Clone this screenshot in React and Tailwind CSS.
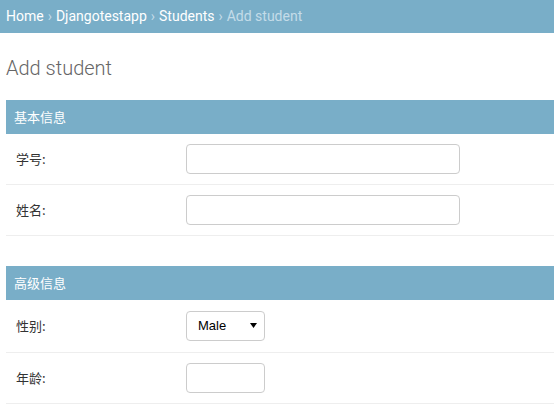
export default function App() {
  const Row = ({ label, children, h = "h-[51px]" }) => (
    <div className={`flex items-center ${h} border-b border-[#eee] px-[10px]`}>
      <div className="w-[170px] text-[13px] text-[#333] font-['Noto_Sans_CJK_SC','Microsoft_YaHei',sans-serif]">{label}</div>
      {children}
    </div>
  );
  const Header = ({ children }) => (
    <div className="h-[34px] bg-[#79aec8] px-[8px] flex items-center text-[13px] text-white font-['Noto_Sans_CJK_SC',sans-serif]">
      {children}
    </div>
  );
  return (
    <div className="min-h-screen bg-white font-['Roboto',sans-serif]">
      <div className="h-[33px] bg-[#79aec8] px-[6px] flex items-center text-[14px] text-white">
        <span>Home</span>
        <span className="text-[#c4dce8] mx-[4px]">›</span>
        <span>Djangotestapp</span>
        <span className="text-[#c4dce8] mx-[4px]">›</span>
        <span>Students</span>
        <span className="text-[#c4dce8] mx-[4px]">›</span>
        <span className="text-[#c4dce8]">Add student</span>
      </div>
      <h1 className="pt-[22px] pb-[19px] px-[6px] text-[20px] leading-[26px] font-light text-[#666]">Add student</h1>
      <div className="ml-[6px] mb-[30px]">
        <Header>基本信息</Header>
        <Row label="学号:">
          <div className="w-[274px] h-[30px] border border-[#ccc] rounded-[4px] bg-white"></div>
        </Row>
        <Row label="姓名:">
          <div className="w-[274px] h-[30px] border border-[#ccc] rounded-[4px] bg-white"></div>
        </Row>
      </div>
      <div className="ml-[6px]">
        <Header>高级信息</Header>
        <Row label="性别:" h="h-[53px]">
          <div className="relative w-[79px] h-[30px] border border-[#ccc] rounded-[4px] bg-white flex items-center pl-[11px] text-[13px] text-black font-['Liberation_Sans',Arial,sans-serif]">
            Male
            <svg className="absolute right-[7px] top-[11px]" width="7" height="5" viewBox="0 0 7 5">
              <path d="M0 0 L7 0 L3.5 5 Z" fill="#000" />
            </svg>
          </div>
        </Row>
        <Row label="年龄:">
          <div className="w-[79px] h-[30px] border border-[#ccc] rounded-[4px] bg-white"></div>
        </Row>
      </div>
    </div>
  );
}
